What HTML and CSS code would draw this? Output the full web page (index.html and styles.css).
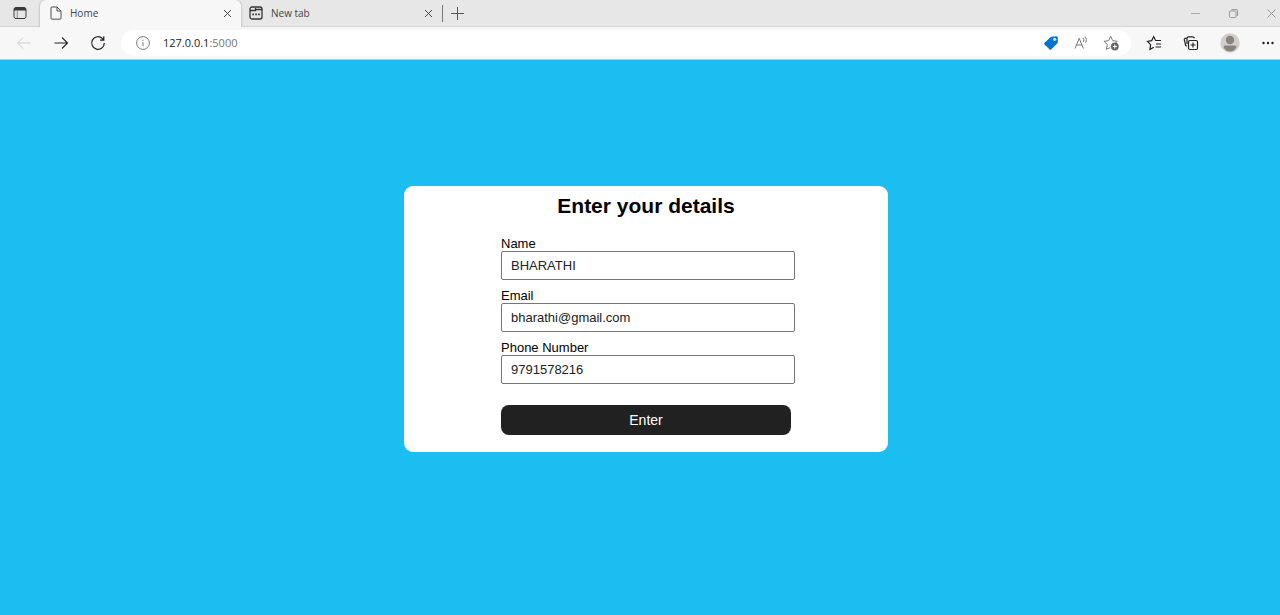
FILE: index.html
```
<!DOCTYPE html>
<html lang="en">
<head>
<meta charset="utf-8">
<title>Home</title>
<link rel="stylesheet" href="styles.css">
</head>
<body>
<header class="browser">
  <div class="tabstrip">
    <button class="icon-btn tab-actions" aria-label="Tab actions">
      <svg width="14" height="14" viewBox="0 0 14 14" fill="none" stroke="#3a3a3a"><rect x="1" y="1.500" width="12" height="11" rx="2"/><path d="M1 3.500h12M2 2.200h10" stroke-width="1.800"/><path d="M4.300 4v8" stroke="#8a8a8a"/></svg>
    </button>
    <div class="tab tab-active">
      <svg width="12" height="14" viewBox="0 0 12 14" fill="none" stroke="#505050"><path d="M1 2a1 1 0 0 1 1-1h5l4 4v7.200a1 1 0 0 1-1 1H2a1 1 0 0 1-1-1zM7 1v4h4"/></svg>
      <span class="tab-title">Home</span>
      <button class="icon-btn" aria-label="Close Home"><svg width="9" height="9" viewBox="0 0 9 9" stroke="#444"><path d="M1 1l7 7M8 1L1 8"/></svg></button>
    </div>
    <div class="tab">
      <svg width="14" height="14" viewBox="0 0 14 14" fill="none" stroke="#333" stroke-width="1.300"><rect x="1" y="1" width="12" height="12" rx="2"/><path d="M1 4.500h5.500V2M6.500 3.500h6.500"/><path d="M3.300 8.300h1.700M6.200 8.300h1.700M9.100 8.300h1.700" stroke-width="1.700"/></svg>
      <span class="tab-title">New tab</span>
      <button class="icon-btn" aria-label="Close New tab"><svg width="9" height="9" viewBox="0 0 9 9" stroke="#444"><path d="M1 1l7 7M8 1L1 8"/></svg></button>
    </div>
    <button class="icon-btn new-tab" aria-label="New tab"><svg width="13" height="13" viewBox="0 0 13 13" stroke="#555"><path d="M6.500 0v13M0 6.500h13"/></svg></button>
    <div class="window-controls">
      <button class="icon-btn" aria-label="Minimize"><svg width="11" height="11" viewBox="0 0 11 11" stroke="#aaa"><path d="M1 5.500h9"/></svg></button>
      <button class="icon-btn" aria-label="Restore"><svg width="11" height="11" viewBox="0 0 11 11" fill="none" stroke="#999"><rect x="1.500" y="3" width="6.500" height="6.500" rx="1"/><path d="M3.500 1.500h4.500a1.500 1.500 0 0 1 1.500 1.500v5"/></svg></button>
      <button class="icon-btn" aria-label="Close"><svg width="11" height="11" viewBox="0 0 11 11" stroke="#999"><path d="M1.500 1.500l8 8M9.500 1.500l-8 8"/></svg></button>
    </div>
  </div>
  <div class="toolbar">
    <div class="nav">
      <button class="icon-btn" aria-label="Back"><svg width="16" height="14" viewBox="0 0 16 14" fill="none" stroke="#cfcfcf"><path d="M14.500 7H1.500M7 1.500L1.500 7L7 12.500"/></svg></button>
      <button class="icon-btn" aria-label="Forward"><svg width="16" height="14" viewBox="0 0 16 14" fill="none" stroke="#222" stroke-width="1.100"><path d="M1.500 7h13M9 1.500L14.500 7L9 12.500"/></svg></button>
      <button class="icon-btn" aria-label="Refresh"><svg width="16" height="16" viewBox="0 0 16 16" fill="none" stroke="#222" stroke-width="1.200"><path d="M14.300 8A6.300 6.300 0 1 1 12.400 3.500L13.500 4.700M13.800 1.200v3.900H10"/></svg></button>
    </div>
    <div class="address">
      <svg width="14" height="14" viewBox="0 0 14 14" fill="none" stroke="#777"><circle cx="7" cy="7" r="6.400"/><path d="M7 6.200v4M7 3.700v1.200"/></svg>
      <span class="url">127.0.0.1<span class="port">:5000</span></span>
      <button class="icon-btn" aria-label="Shopping"><svg width="16" height="16" viewBox="0 0 16 16"><path d="M8.500 1.800L13.200 1.200Q14.800 1.200 14.800 2.500V7.200Q14.800 7.800 14.200 8.400L8.400 14.200Q7.400 15.200 6.400 14.200L1.500 9.500Q.5 8.600 1.500 7.700L7.300 2.400Q7.800 1.900 8.500 1.800Z" fill="#0874cf"/><circle cx="11.700" cy="4.300" r="1.600" fill="#d8e69a"/></svg></button>
      <button class="icon-btn" aria-label="Read aloud"><svg width="16" height="16" viewBox="0 0 16 16" fill="none" stroke="#777"><path d="M2 13.500L6.200 3.300L10.400 13.500M3.500 10h5.400M10 3q1.500 1.500 .5 3.800M12 1.500q2.600 2.800 .7 6.300"/></svg></button>
      <button class="icon-btn" aria-label="Add to favorites"><svg width="16" height="16" viewBox="0 0 16 16" fill="none" stroke="#777"><path d="M7 12.700L3.400 14.300L4.300 9.700L1 6.300L5.600 5.700L7.700 1.300L9.700 5.700L14.200 6.300L13 7.700"/><circle cx="11.800" cy="11.500" r="3.900" fill="#666" stroke="none"/><path d="M11.800 9.500v4M9.800 11.500h4" stroke="#fff"/></svg></button>
    </div>
    <div class="tools">
      <button class="icon-btn" aria-label="Favorites"><svg width="16" height="16" viewBox="0 0 16 16" fill="none" stroke="#222" stroke-width="1.200"><path d="M7.800 12.200L4 14.300L4.600 9.700L1.500 6.300L5.700 5.600L7.700 1.600L9.600 5.500H15M10 9H15M9.500 12H15"/></svg></button>
      <button class="icon-btn" aria-label="Collections"><svg width="16" height="16" viewBox="0 0 16 16" fill="none" stroke="#222" stroke-width="1.200"><rect x="5.500" y="5.500" width="9" height="9" rx="1.500"/><path d="M10 7.500v5M7.500 10h5M3.800 11.200L2.700 10.500L1.300 4.700Q1.100 3.700 2.100 3.400L4 3M4 9V3.200Q4 1.800 5.300 1.800H9.500Q11 1.800 11.500 3.300"/></svg></button>
      <button class="icon-btn" aria-label="Profile"><svg width="20" height="20" viewBox="0 0 20 20"><circle cx="10" cy="10" r="9.700" fill="#d1cfcd"/><circle cx="10" cy="7" r="4.200" fill="#878480"/><path d="M3.500 14Q3.700 12.600 5.500 12.600h9Q16.300 12.600 16.500 14Q14.500 18.500 10 18.500Q5.500 18.500 3.500 14Z" fill="#878480"/></svg></button>
      <button class="icon-btn" aria-label="Settings and more"><svg width="14" height="4" viewBox="0 0 14 4" fill="#222"><circle cx="2.500" cy="2" r="1.200"/><circle cx="7" cy="2" r="1.200"/><circle cx="11.500" cy="2" r="1.200"/></svg></button>
    </div>
  </div>
</header>
<main class="page">
  <form class="card">
    <h1 class="heading">Enter your details</h1>
    <div class="field">
      <label for="name">Name</label>
      <input id="name" type="text" value="BHARATHI">
    </div>
    <div class="field">
      <label for="email">Email</label>
      <input id="email" type="email" value="bharathi@gmail.com">
    </div>
    <div class="field">
      <label for="phone">Phone Number</label>
      <input id="phone" type="tel" value="9791578216">
    </div>
    <button class="submit" type="button">Enter</button>
  </form>
</main>
</body>
</html>
```

FILE: styles.css
```
* {
  box-sizing: border-box;
}

body {
  margin: 0;
  min-height: 100vh;
  display: flex;
  flex-direction: column;
  overflow-x: hidden;
  background: #1cbdf0;
  font-family: "Liberation Sans", Arial, sans-serif;
}

.icon-btn {
  display: flex;
  align-items: center;
  justify-content: center;
  flex: none;
  padding: 0;
  border: 0;
  background: none;
}

.browser {
  background: #f7f7f7;
  border-bottom: 1px solid #b5cdd8;
  font-family: "Open Sans", "Noto Sans", sans-serif;
}

.tabstrip {
  display: flex;
  height: 27px;
  padding-bottom: 1px;
  background: #e7e7e7;
  box-shadow: inset 0 -1px #d3d3d3;
}

.tab-actions {
  width: 40px;
}

.tab {
  display: flex;
  align-items: center;
  width: 201px;
  padding: 0 9px 0 8px;
  font-size: 10px;
  color: #444;
}

.tab-active {
  padding-left: 10px;
  margin-bottom: -1px;
  padding-bottom: 1px;
  background: #f7f7f7;
  border-radius: 6px 6px 0 0;
  box-shadow: -1px 0 2px #c8c8c8, 1px 0 2px #c8c8c8;
  clip-path: inset(0 -3px);
}

.tab-title {
  flex: 1;
  padding-left: 8px;
}

.new-tab {
  width: 29px;
  height: 17px;
  margin-top: 5px;
  border-left: 1px solid #777;
}

.window-controls {
  display: flex;
  gap: 27px;
  margin-left: auto;
  padding-right: 3px;
}

.toolbar {
  display: flex;
  align-items: center;
  height: 32px;
  padding-right: 5px;
}

.nav {
  display: flex;
  gap: 21px;
  padding: 0 15px 0 16px;
}

.address {
  display: flex;
  flex: 1;
  align-items: center;
  gap: 14px;
  height: 26px;
  padding: 0 12px 0 15px;
  border-radius: 13px;
  background: #fff;
}

.url {
  flex: 1;
  margin-left: -1px;
  padding-bottom: 2px;
  font-size: 11px;
  color: #222;
}

.port {
  color: #777;
}

.tools {
  display: flex;
  align-items: center;
  gap: 21px;
  padding-left: 15px;
}

.page {
  flex: 1;
  display: flex;
  align-items: flex-start;
  justify-content: center;
  padding: 126px 0 40px 12px;
}

.card {
  width: 484px;
  max-width: 100%;
  padding: 8px 97px 17px;
  border-radius: 9px;
  background: #fff;
}

.heading {
  margin: 0 0 18px;
  font-size: 21px;
  line-height: 24px;
  text-align: center;
}

.field {
  display: flex;
  flex-direction: column;
  width: 294px;
  margin-bottom: 8px;
  font-size: 13px;
  line-height: 15px;
}

.field input {
  height: 29px;
  padding: 0 9px;
  border: 1px solid #767676;
  border-radius: 2px;
  background: #fff;
  color: #222;
  font: inherit;
}

.submit {
  display: block;
  width: 100%;
  height: 30px;
  margin-top: 21px;
  border: 0;
  border-radius: 8px;
  background: #212121;
  color: #fff;
  font-family: inherit;
  font-size: 14px;
}
```
